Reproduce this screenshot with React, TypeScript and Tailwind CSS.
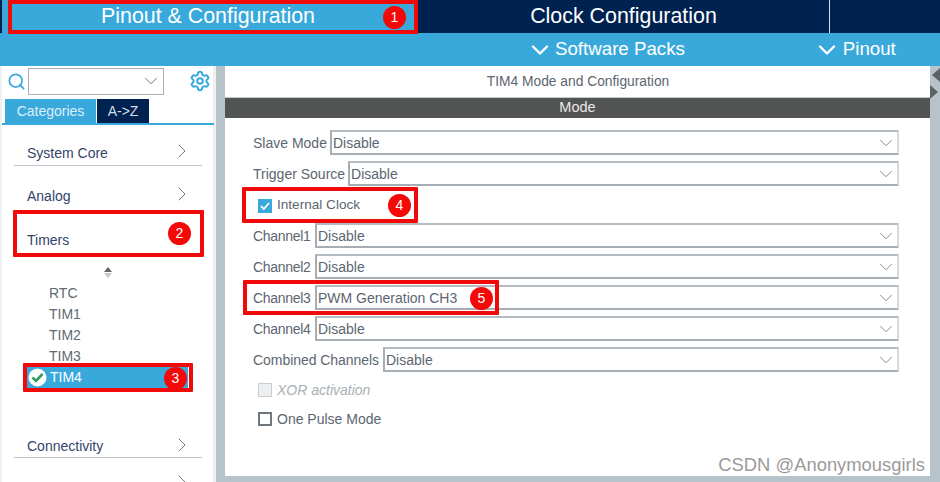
import { ChevronDown, ChevronRight, Search, Settings } from "lucide-react";

const FONT = "font-['Liberation_Sans',Arial,sans-serif]";

function Select({ value }: { value: string }) {
  return (
    <div className="flex h-[25px] min-w-0 flex-1 items-center justify-between border-2 border-t-[#b4bcc2] border-l-[#a6aeb4] border-r-[#d5dadd] border-b-[#a6aeb4] pl-[1px] text-[14px] text-[#5c6670]">
      <span className="pt-[1px]">{value}</span>
      <ChevronDown size={22} strokeWidth={1} className="text-[#77828a]" />
    </div>
  );
}

function FormRow({ label, value, extra, labelClass }: { label: string; value: string; extra?: string; labelClass?: string }) {
  return (
    <div className={`flex h-[25px] items-center gap-[3px] ${extra ?? ""}`}>
      <span className={`pt-[1px] text-[14px] whitespace-nowrap text-[#5c6670] ${labelClass ?? ""}`}>{label}</span>
      <Select value={value} />
    </div>
  );
}

function Category({ label, line, extra, chevron = true }: { label?: string; line?: boolean; extra?: string; chevron?: boolean }) {
  return (
    <div className={`ml-[14px] flex w-[188px] items-center justify-between pr-[8px] pl-[13px] ${line ? "border-b border-[#bcc6cc]" : ""} ${extra ?? ""}`}>
      <span className="text-[14px] text-[#34436b]">{label}</span>
      {chevron && <ChevronRight size={24} strokeWidth={1} className="mt-[-4px] text-[#6f7a84]" />}
    </div>
  );
}

function Badge({ n, className }: { n: number; className: string }) {
  return (
    <span className={`absolute flex h-[23px] w-[23px] items-center justify-center rounded-full bg-[#f50808] text-[14px] text-white ${className}`}>
      {n}
    </span>
  );
}

function Mark({ className }: { className: string }) {
  return <div className={`absolute rounded-[1px] border-4 border-[#f00a0a] ${className}`} />;
}

const CHANNEL_LABEL = "w-[59px] tracking-[-0.3px]";

export default function App() {
  return (
    <div className={`relative flex h-[482px] w-[940px] flex-col overflow-hidden bg-[#b6c3ca] ${FONT}`}>
      <div className="flex h-[33px] shrink-0 bg-[#002251] text-white">
        <div className="ml-[2px] flex w-[414px] items-center justify-center bg-[#39a9dc] pr-[2px] text-[21.4px]">
          Pinout &amp; Configuration
        </div>
        <div className="flex w-[414px] items-center justify-center border-r border-[#d9dee3] pl-[2px] text-[21.4px]">
          Clock Configuration
        </div>
      </div>

      <div className="flex h-[33px] shrink-0 items-center bg-[#39a9dc] pl-[526px] text-[18.7px] text-white">
        <ChevronDown size={28} strokeWidth={2} />
        <span className="ml-[1px]">Software Packs</span>
        <ChevronDown size={28} strokeWidth={2} className="ml-[128px]" />
        <span className="ml-[2px]">Pinout</span>
      </div>

      <div className="flex min-h-0 flex-1">
        <aside className="h-full w-[216px] shrink-0 overflow-hidden bg-white shadow-[inset_2px_0_0_#eef1f2,inset_-3px_0_0_#eef1f2]">
          <div className="flex h-[30px] items-center pl-[7px]">
            <Search size={19} strokeWidth={2.2} className="text-[#39a9dc]" />
            <div className="ml-[2px] flex h-[27px] w-[136px] items-center justify-end border border-[#a9b1b7] pr-[1px]">
              <ChevronDown size={22} strokeWidth={1} className="text-[#667079]" />
            </div>
            <Settings size={22} strokeWidth={2.2} className="ml-[25px] text-[#39a9dc]" />
          </div>
          <div className="ml-[5px] mt-[3px] flex h-[24px]">
            <div className="flex w-[91px] items-center justify-center bg-[#39a9dc] text-[14px] text-[#dcf0fa]">Categories</div>
            <div className="ml-[1px] flex w-[52px] items-center justify-center bg-[#002251] text-[14px] text-[#d6dde6]">A-&gt;Z</div>
          </div>
          <div className="ml-[2px] h-[2px] w-[212px] bg-[#39a9dc]" />

          <Category label="System Core" line extra="h-[41px] pt-[16px]" />
          <Category label="Analog" extra="h-[44px] pt-[16px]" />
          <Category label="Timers" chevron={false} extra="h-[44px] pt-[17px]" />

          <div className="mt-[8px] flex h-[20px] flex-col items-center justify-center gap-[1px]">
            <span className="h-0 w-0 border-x-[4px] border-b-[5px] border-x-transparent border-b-[#5d666d]" />
            <span className="h-0 w-0 border-x-[4px] border-t-[5px] border-x-transparent border-t-[#c2c8cc]" />
          </div>

          <div className="mt-[1px] flex flex-col pl-[49px] text-[14px] leading-[21px] text-[#606a73]">
            <span>RTC</span>
            <span>TIM1</span>
            <span>TIM2</span>
            <span className="h-[20px]">TIM3</span>
          </div>
          <div className="ml-[27px] flex h-[22px] w-[161px] items-center bg-[#39a9dc] pl-[1px] text-[14px] text-white">
            <svg width="19" height="19" viewBox="0 0 19 19" className="shrink-0">
              <circle cx="9.5" cy="9.5" r="9" fill="#ffffff" />
              <path d="M4.5 9.5 8 13l6.5-7" fill="none" stroke="#2f9e5b" strokeWidth="2.6" />
            </svg>
            <span className="ml-[3px]">TIM4</span>
          </div>

          <Category label="Connectivity" line extra="mt-[44px] h-[26px] pt-[4px]" />
          <Category extra="mt-[13px] h-[26px]" />
        </aside>

        <main className="ml-[9px] mb-[6px] flex w-[705px] shrink-0 flex-col bg-white">
          <div className="flex h-[32px] items-center justify-center border-b border-[#c4cacd] pt-[1px] pl-[1px] text-[13.8px] text-[#5c6670]">
            TIM4 Mode and Configuration
          </div>
          <div className="flex h-[20px] items-center justify-center bg-[#525453] text-[14.5px] text-[#e8e8e8]">
            Mode
          </div>

          <div className="flex w-[674px] flex-col pl-[28px] pt-[12px]">
            <FormRow label="Slave Mode" value="Disable" />
            <FormRow label="Trigger Source" value="Disable" extra="mt-[6px]" />
            <div className="mt-[6px] flex h-[31px] items-center gap-[5px] pb-[4px] pl-[5px] text-[13.6px] text-[#5c6670]">
              <span className="flex h-[14px] w-[14px] items-center justify-center bg-[#39a9dc]">
                <svg width="12" height="12" viewBox="0 0 12 12">
                  <path d="M2 6.2 4.8 9 10 3" fill="none" stroke="#ffffff" strokeWidth="1.8" />
                </svg>
              </span>
              Internal Clock
            </div>
            <FormRow label="Channel1" value="Disable" labelClass={CHANNEL_LABEL} />
            <FormRow label="Channel2" value="Disable" extra="mt-[6px]" labelClass={CHANNEL_LABEL} />
            <FormRow label="Channel3" value="PWM Generation CH3" extra="mt-[6px]" labelClass={CHANNEL_LABEL} />
            <FormRow label="Channel4" value="Disable" extra="mt-[6px]" labelClass={CHANNEL_LABEL} />
            <FormRow label="Combined Channels" value="Disable" extra="mt-[6px]" labelClass="w-[127px] tracking-[-0.05px]" />
            <div className="mt-[8px] flex h-[20px] items-center gap-[5px] pl-[5px] text-[14px] italic text-[#a8afb5]">
              <span className="h-[14px] w-[14px] border border-[#c8ced2] bg-[#eceef0]" />
              XOR activation
            </div>
            <div className="mt-[9px] flex h-[20px] items-center gap-[5px] pl-[5px] text-[14px] text-[#5c6670]">
              <span className="h-[14px] w-[14px] border-2 border-[#6f767c]" />
              One Pulse Mode
            </div>
          </div>
        </main>

        <div className="flex flex-1 flex-col gap-[3px] pt-[2px]">
          <span className="ml-[2px] h-0 w-0 border-y-[7px] border-r-[8px] border-y-transparent border-r-[#5c6268]" />
          <span className="h-0 w-0 border-y-[7px] border-l-[8px] border-y-transparent border-l-[#5c6268]" />
        </div>
      </div>

      <span className="absolute right-[15px] top-[451px] text-[18.4px] text-[#9a9a9a]">CSDN @Anonymousgirls</span>

      <Mark className="left-[8px] top-0 h-[34px] w-[410px]" />
      <Badge n={1} className="left-[383px] top-[6px]" />
      <Mark className="left-[13px] top-[210px] h-[47px] w-[191px]" />
      <Badge n={2} className="left-[168px] top-[222px]" />
      <Mark className="left-[23px] top-[363px] h-[29px] w-[170px]" />
      <Badge n={3} className="left-[164px] top-[367px]" />
      <Mark className="left-[242px] top-[187px] h-[36px] w-[176px]" />
      <Badge n={4} className="left-[388px] top-[194px]" />
      <Mark className="left-[243px] top-[280px] h-[35px] w-[256px]" />
      <Badge n={5} className="left-[470px] top-[287px]" />
    </div>
  );
}
